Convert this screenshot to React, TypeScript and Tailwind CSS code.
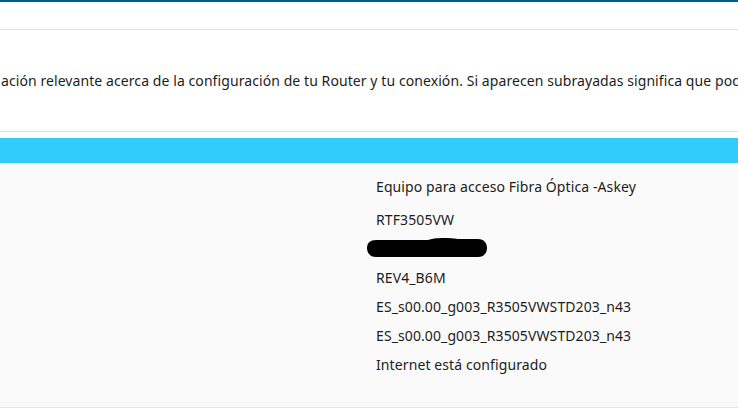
export default function App() {
  const font = { fontFamily: '"Noto Sans", "Open Sans", sans-serif' };
  return (
    <div className="min-h-screen w-[738px] overflow-hidden bg-white text-[#1d1d1b]" style={font}>
      <div className="h-[2px] bg-[#005f8a]" />
      <div className="h-[28px] border-b border-[#e3e3e3]" />

      <section className="flex h-[102px] items-center overflow-hidden border-b border-[#e3e3e3]">
        <p className="whitespace-nowrap pl-[1px] text-[14px] tracking-[0.08px]">
          ación relevante acerca de la configuración de tu Router y tu conexión. Si aparecen subrayadas significa que podrás modificarlas
        </p>
      </section>

      <div className="mt-[6px] h-[25px] bg-[#31ccfc]" />

      <div className="border-b border-[#e6e6e6] bg-[#fafafa] pb-[28px] pt-[9px] text-[14px] tracking-[0.1px]">
        <div className="grid grid-cols-[376px_1fr]">
          <div />
          <div className="flex flex-col">
            <div className="flex h-[29px] items-center">Equipo para acceso Fibra Óptica -Askey</div>
            <div className="mt-[4px] flex h-[29px] items-center">RTF3505VW</div>
            <div className="flex h-[29px] items-center pb-[3px]">
              <svg width="124" height="23" viewBox="0 0 124 23" className="-ml-[10px]">
                <path
                  d="M10 4 H62 C66 2 80 1 92 3 H112 C118 3 121 7 121 12 C121 17 118 21 112 21 H10 C4 21 1 17 1 12 C1 7 4 4 10 4 Z"
                  fill="#000"
                />
              </svg>
            </div>
            <div className="flex h-[29px] items-center">REV4_B6M</div>
            <div className="flex h-[29px] items-center">ES_s00.00_g003_R3505VWSTD203_n43</div>
            <div className="flex h-[29px] items-center">ES_s00.00_g003_R3505VWSTD203_n43</div>
            <div className="flex h-[29px] items-center">Internet está configurado</div>
          </div>
        </div>
      </div>
    </div>
  );
}
